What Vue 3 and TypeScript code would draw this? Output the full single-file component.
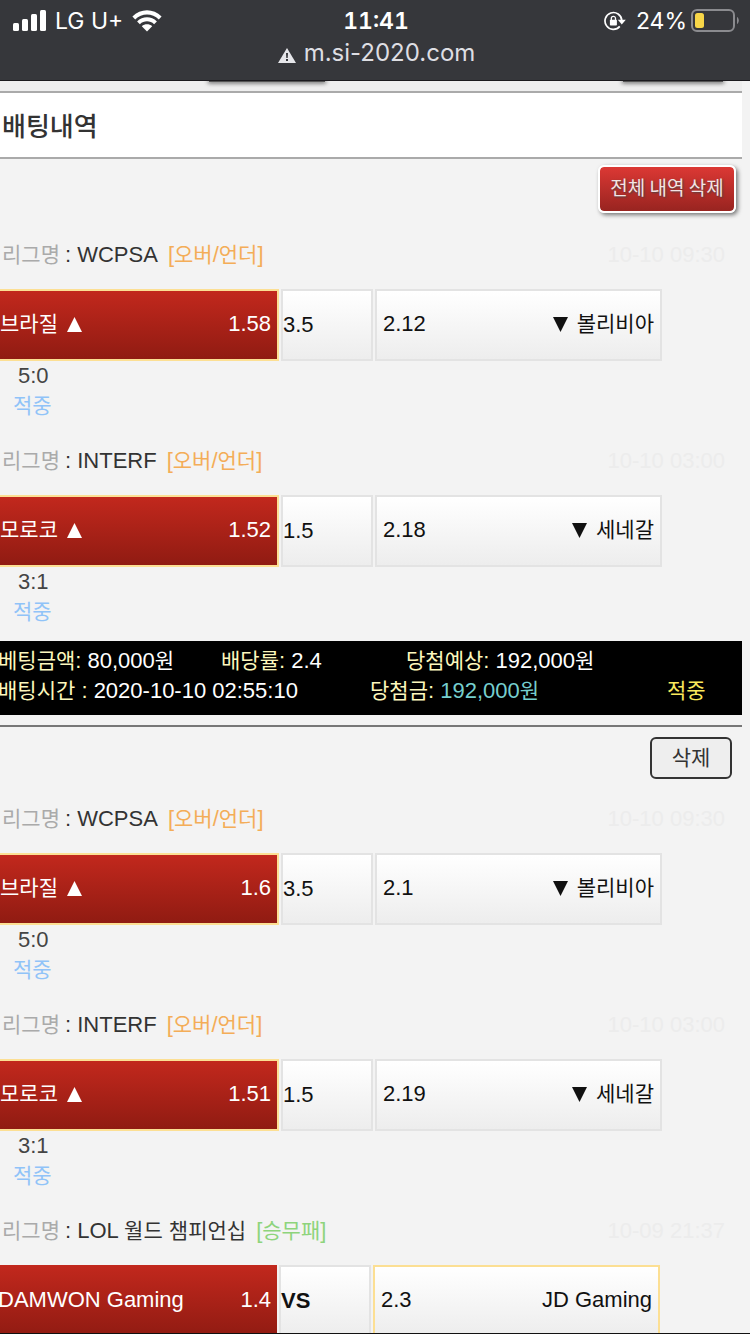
<script setup lang="ts">
import { h, type FunctionalComponent } from 'vue'

type Kind = 'overUnder' | 'result'

interface Match {
  league: string
  kind: Kind
  date: string
  home: string
  homeOdds: string
  line: string
  awayOdds: string
  away: string
  score?: string
  outcome?: string
}

interface Slip {
  action: string
  primary: boolean
  matches: Match[]
  summary?: {
    stake: string
    odds: string
    expected: string
    time: string
    payout: string
    status: string
  }
}

/* Hangul runs are set one step smaller than the Latin text beside them. */
const Txt: FunctionalComponent<{ t: string }> = (props) =>
  h(
    'span',
    { class: 'txt' },
    props.t
      .split(/([\uac00-\ud7a3]+)/)
      .filter((part) => part !== '')
      .map((part) => (/[\uac00-\ud7a3]/.test(part) ? h('span', { class: 'ko' }, part) : part)),
  )
Txt.props = ['t']

const kindLabel: Record<Kind, string> = {
  overUnder: '[오버/언더]',
  result: '[승무패]',
}

const brazil = (homeOdds: string, awayOdds: string): Match => ({
  league: 'WCPSA',
  kind: 'overUnder',
  date: '10-10 09:30',
  home: '브라질',
  homeOdds,
  line: '3.5',
  awayOdds,
  away: '볼리비아',
  score: '5:0',
  outcome: '적중',
})

const morocco = (homeOdds: string, awayOdds: string): Match => ({
  league: 'INTERF',
  kind: 'overUnder',
  date: '10-10 03:00',
  home: '모로코',
  homeOdds,
  line: '1.5',
  awayOdds,
  away: '세네갈',
  score: '3:1',
  outcome: '적중',
})

const slips: Slip[] = [
  {
    action: '전체 내역 삭제',
    primary: true,
    matches: [brazil('1.58', '2.12'), morocco('1.52', '2.18')],
    summary: {
      stake: '80,000원',
      odds: '2.4',
      expected: '192,000원',
      time: '2020-10-10 02:55:10',
      payout: '192,000원',
      status: '적중',
    },
  },
  {
    action: '삭제',
    primary: false,
    matches: [
      brazil('1.6', '2.1'),
      morocco('1.51', '2.19'),
      {
        league: 'LOL 월드 챔피언십',
        kind: 'result',
        date: '10-09 21:37',
        home: 'DAMWON Gaming',
        homeOdds: '1.4',
        line: 'VS',
        awayOdds: '2.3',
        away: 'JD Gaming',
      },
    ],
  },
]
</script>

<template>
  <div class="screen">
    <header class="chrome">
      <div class="status">
        <div class="carrier">
          <svg class="signal" viewBox="0 0 33 21" aria-hidden="true">
            <rect x="0" y="13" width="6" height="8" rx="1.5" />
            <rect x="9" y="9" width="6" height="12" rx="1.5" />
            <rect x="18" y="4" width="6" height="17" rx="1.5" />
            <rect x="27" y="0" width="6" height="21" rx="1.5" />
          </svg>
          <span>LG U+</span>
          <svg class="wifi" viewBox="0 0 30 22" aria-hidden="true">
            <path d="M0.4 6.6 C8.6 -1.9 21.4 -1.9 29.6 6.6 L26.8 9.4 C20.2 2.8 9.8 2.8 3.2 9.4 Z" />
            <path d="M5.1 11.4 C10.7 6 19.3 6 24.9 11.4 L22.1 14.2 C18.1 10.4 11.9 10.4 7.9 14.2 Z" />
            <path d="M9.8 16.2 C12.7 13.6 17.3 13.6 20.2 16.2 L15 21.6 Z" />
          </svg>
        </div>
        <time class="clock">11:41</time>
        <div class="power">
          <svg class="lock" viewBox="0 0 22 20" aria-hidden="true">
            <path d="M15.8 15.4 A8.4 8.4 0 1 1 17.8 9.5" fill="none" stroke="#fff" stroke-width="1.7" />
            <path d="M13.8 8.8 H21.8 L17.8 13.4 Z" />
            <rect x="5.9" y="8.8" width="7" height="5.8" rx="0.8" />
            <path d="M7.3 9.4 V7.4 A2.1 2.1 0 0 1 11.5 7.4 V9.4" fill="none" stroke="#fff" stroke-width="1.3" />
          </svg>
          <span class="percent">24%</span>
          <svg class="battery" viewBox="0 0 48 24" aria-hidden="true">
            <rect x="1" y="1" width="42" height="21" rx="5" fill="none" stroke="#8b8b8f" stroke-width="2" />
            <rect x="4" y="4" width="9" height="15" rx="2.5" fill="#f8d648" />
            <path d="M46 8 C48.4 9.2 48.4 13.8 46 15 Z" fill="#8b8b8f" />
          </svg>
        </div>
      </div>
      <div class="address">
        <svg class="warn" viewBox="0 0 18 15" aria-hidden="true">
          <path d="M9 0 L18 15 H0 Z" fill="#e6e6ea" />
          <path d="M8 5 H10 L9.7 10 H8.3 Z M8 11 H10 V13 H8 Z" fill="#36373b" />
        </svg>
        <span>m.si-2020.com</span>
      </div>
    </header>

    <main class="page">
      <div class="tabs" aria-hidden="true">
        <span class="tab"></span>
        <span class="tab tab-end"></span>
      </div>
      <h1 class="title">배팅내역</h1>

      <section v-for="(slip, s) in slips" :key="s" class="slip">
        <div class="tools" :class="{ 'tools-primary': slip.primary }">
          <button type="button" :class="slip.primary ? 'btn-red' : 'btn-plain'">{{ slip.action }}</button>
        </div>

        <article v-for="(m, i) in slip.matches" :key="i" class="match" :class="{ versus: m.kind === 'result' }">
          <div class="league">
            <span class="label"><Txt t="리그명" /></span>
            <span class="name"><Txt :t="': ' + m.league" /></span>
            <span class="kind"><Txt :t="kindLabel[m.kind]" /></span>
            <time class="date">{{ m.date }}</time>
          </div>
          <div class="odds">
            <div class="cell home">
              <span class="team">
                <Txt :t="m.home" />
                <svg v-if="m.kind === 'overUnder'" class="tri" viewBox="0 0 15 15" aria-hidden="true">
                  <path d="M7.5 0 L15 15 H0 Z" />
                </svg>
              </span>
              <span>{{ m.homeOdds }}</span>
            </div>
            <div class="cell line">{{ m.line }}</div>
            <div class="cell away">
              <span>{{ m.awayOdds }}</span>
              <span class="team">
                <svg v-if="m.kind === 'overUnder'" class="tri" viewBox="0 0 15 15" aria-hidden="true">
                  <path d="M0 0 H15 L7.5 15 Z" />
                </svg>
                <Txt :t="m.away" />
              </span>
            </div>
          </div>
          <div v-if="m.score" class="score">{{ m.score }}</div>
          <div v-if="m.outcome" class="outcome"><Txt :t="m.outcome" /></div>
        </article>

        <div v-if="slip.summary" class="summary">
          <div class="row row-top">
            <span><Txt t="베팅금액: " /><b><Txt :t="slip.summary.stake" /></b></span>
            <span><Txt t="배당률: " /><b>{{ slip.summary.odds }}</b></span>
            <span><Txt t="당첨예상: " /><b><Txt :t="slip.summary.expected" /></b></span>
          </div>
          <div class="row row-bottom">
            <span><Txt t="배팅시간 : " /><b>{{ slip.summary.time }}</b></span>
            <span><Txt t="당첨금: " /><b class="payout"><Txt :t="slip.summary.payout" /></b></span>
            <span class="state"><Txt :t="slip.summary.status" /></span>
          </div>
        </div>
      </section>
    </main>
    <div class="edge"></div>
  </div>
</template>

<style>
body {
  margin: 0;
  background: #f3f3f3;
}

.txt {
  white-space: pre;
}

.ko {
  font-size: 21px;
}
</style>

<style scoped>
.screen {
  display: flex;
  flex-direction: column;
  height: 100vh;
  overflow: hidden;
  background: #f3f3f3;
  color: #333;
  font-family: "Liberation Sans", "Noto Sans CJK KR", sans-serif;
  font-size: 22px;
  line-height: 30px;
}

.chrome {
  flex: none;
  height: 80px;
  border-bottom: 1px solid #1b1a1e;
  background: #36373b;
  color: #fff;
  font-family: Inter, "Liberation Sans", sans-serif;
  font-size: 23px;
}

.chrome svg {
  fill: #fff;
}

.status {
  display: grid;
  grid-template-columns: 1fr auto 1fr;
  align-items: center;
  height: 41px;
  padding: 0 11px 0 13px;
}

.carrier,
.power {
  display: flex;
  align-items: center;
}

.carrier {
  gap: 9px;
}

.power {
  justify-content: flex-end;
}

.signal {
  width: 33px;
  height: 21px;
}

.wifi {
  width: 30px;
  height: 22px;
}

.clock {
  font-variant-numeric: tabular-nums;
  font-weight: 600;
}

.lock {
  width: 22px;
  height: 20px;
  margin-right: 10px;
}

.percent {
  margin-right: 4px;
}

.battery {
  width: 48px;
  height: 24px;
}

.address {
  display: flex;
  align-items: center;
  justify-content: center;
  gap: 8px;
  height: 24px;
  padding-left: 3px;
  color: #dedee3;
  font-size: 24px;
}

.warn {
  width: 18px;
  height: 15px;
  margin-top: 4px;
}

.page {
  flex: 1;
  min-height: 0;
  overflow: hidden;
}

.tabs {
  display: flex;
  justify-content: space-between;
  height: 10px;
  margin-right: 8px;
  padding: 0 19px 0 209px;
  overflow: hidden;
  box-sizing: border-box;
  background: #eee;
}

.tab {
  width: 116px;
  height: 1px;
  background: #555;
  box-shadow: 0 0 4px 1px #444;
}

.tab-end {
  width: 100px;
}

.title {
  margin: 0 8px 0 0;
  padding: 0 2px;
  border-top: 2px solid #aaa;
  border-bottom: 2px solid #aaa;
  background: #fff;
  font-family: "Noto Sans CJK KR", sans-serif;
  font-size: 26px;
  font-weight: 500;
  line-height: 64px;
}

.tools {
  display: flex;
  justify-content: flex-end;
  padding: 10px 18px;
}

.tools-primary {
  padding: 6px 14px 12px;
}

button {
  box-sizing: border-box;
  margin: 0;
  padding: 0;
  font-family: "Noto Sans CJK KR", sans-serif;
}

.btn-red {
  width: 138px;
  height: 48px;
  padding-bottom: 6px;
  border: 2px solid #fff;
  border-radius: 6px;
  background: linear-gradient(#dc3834, #982420) padding-box;
  box-shadow: 2px 2px 4px #777;
  color: #f4e4e4;
  font-size: 19px;
  text-shadow: 1px 1px 2px #444;
}

.btn-plain {
  width: 82px;
  height: 42px;
  padding-bottom: 4px;
  border: 2px solid #333;
  border-radius: 6px;
  background: #eee;
  color: #333;
  font-size: 21px;
}

.league {
  display: flex;
  align-items: center;
  height: 60px;
  padding: 0 25px 0 2px;
  white-space: nowrap;
}

.label {
  margin-right: 5px;
  color: #aaa;
}

.kind {
  margin-left: 10px;
  color: #f3ad58;
}

.versus .kind {
  color: #8ed47c;
}

.date {
  margin-left: auto;
  color: #ececec;
}

.odds {
  display: grid;
  grid-template-columns: 1fr 92px 1fr;
  gap: 2px;
  margin: 4px 88px 0 -8px;
}

.cell {
  display: flex;
  align-items: center;
  justify-content: space-between;
  box-sizing: border-box;
  height: 72px;
  padding: 0 6px 2px;
  border: 2px solid #e3e3e3;
  background: linear-gradient(#fff, #ededed) padding-box;
  color: #111;
  white-space: nowrap;
}

.home {
  border-color: #fcdf93;
  background: linear-gradient(#c2281d, #901b12) padding-box;
  color: #fff;
}

.line {
  padding: 0;
}

.versus .odds {
  margin-right: 90px;
  margin-left: -10px;
}

.versus .home {
  padding: 0 6px 2px 8px;
  border: 0;
}

.versus .line {
  font-weight: bold;
}

.versus .away {
  border-color: #fcdf93;
}

.team {
  display: flex;
  align-items: center;
  gap: 9px;
}

.tri {
  width: 15px;
  height: 15px;
  fill: currentColor;
}

.score {
  padding-left: 18px;
  color: #444;
}

.outcome {
  padding: 0 0 10px 13px;
  color: #90c3f8;
}

.summary {
  margin: 4px 8px 10px 0;
  padding: 5px 0 9px;
  background: #000;
  color: #fdf8bd;
}

.slip:not(:last-child)::after {
  display: block;
  height: 2px;
  margin-right: 8px;
  background: #777;
  content: "";
}

.row {
  display: grid;
  margin-left: -2px;
  white-space: nowrap;
}

.row-top {
  grid-template-columns: 223fr 185fr 336fr;
}

.row-bottom {
  grid-template-columns: 372fr 297fr 75fr;
}

.row b {
  color: #fff;
  font-weight: normal;
}

.row .payout {
  color: #76cfcf;
}

.state {
  color: #fbe95c;
}

.edge {
  flex: none;
  height: 1px;
  background: #111;
}
</style>
